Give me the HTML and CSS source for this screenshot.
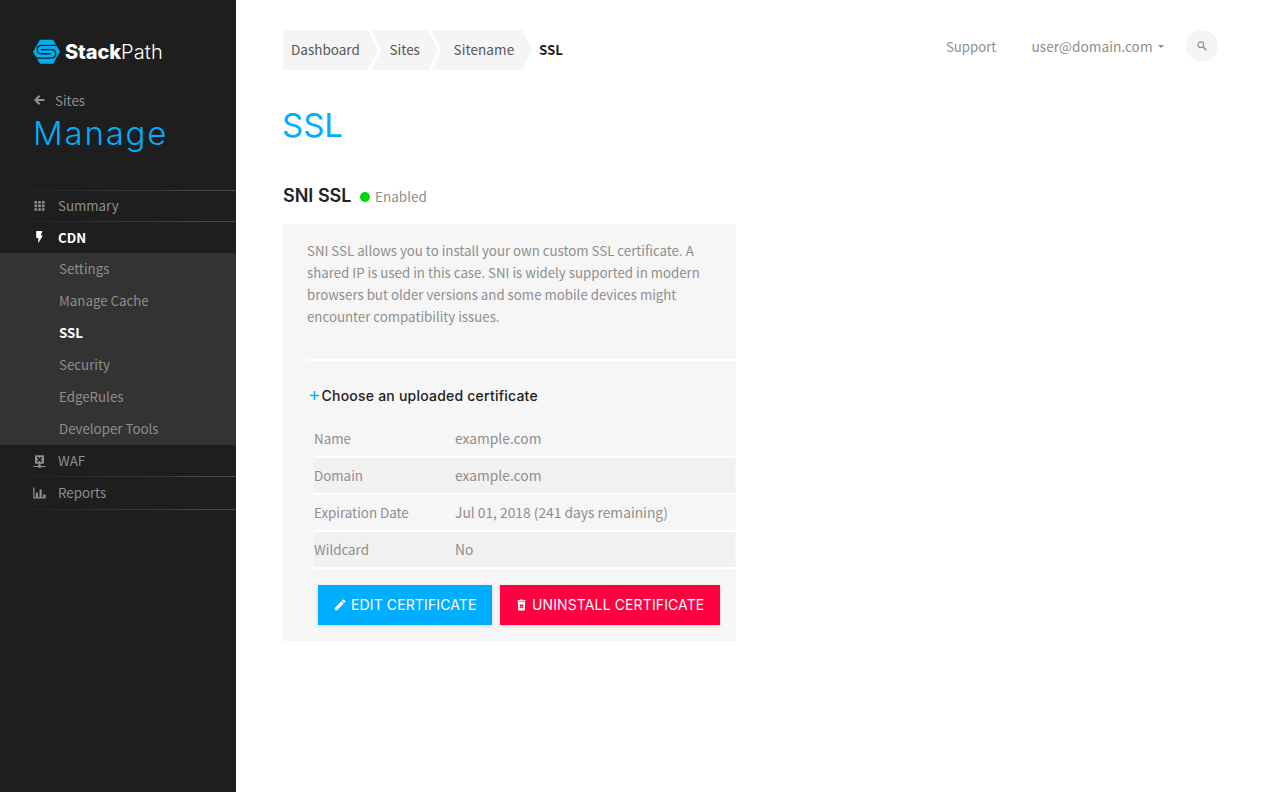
FILE: index.html
```html
<!DOCTYPE html>
<html lang="en">
<head>
<meta charset="utf-8">
<title>StackPath – SSL</title>
<link rel="stylesheet" href="styles.css">
</head>
<body>
<div class="app">
  <aside class="sidebar">
    <div class="logo">
      <svg class="logo-mark" viewBox="0 0 27 25" width="27" height="25">
        <path class="mark-fill" d="M7 .8h13.200L27 12.700l-6.800 12H7L0 12.700z"/>
        <path class="mark-cut" d="M24 6.400H9.200C6 6.400 4.200 8.300 4.200 10.700s1.800 4.100 4.600 4.100h8.700"/>
        <path class="mark-cut" d="M8 10.600h10c3 0 4.700 1.800 4.700 4.200s-1.800 4.300-5 4.300H3"/>
      </svg>
      <span class="logo-text"><b>Stack</b><span>Path</span></span>
    </div>
    <a class="back">
      <svg width="11" height="10" viewBox="0 0 11 10"><path d="M5.500 .7 1.500 5l4 4.300M2 5h8.500" fill="none" stroke="currentColor" stroke-width="2.200"/></svg>
      <span>Sites</span>
    </a>
    <h2 class="side-title">Manage</h2>
    <nav class="nav">
      <a class="item summary">
        <svg width="13" height="12" viewBox="0 0 13 12"><path d="M1.500 1h2.600v2.600H1.500zM5.200 1h2.600v2.600H5.200zM8.900 1h2.600v2.600H8.900zM1.500 4.600h2.600v2.600H1.500zM5.200 4.600h2.600v2.600H5.200zM8.900 4.600h2.600v2.600H8.900zM1.500 8.200h2.600v2.600H1.500zM5.200 8.200h2.600v2.600H5.200zM8.900 8.200h2.600v2.600H8.900z" fill="currentColor"/></svg>
        <span>Summary</span>
      </a>
      <a class="item cdn">
        <svg width="13" height="14" viewBox="0 0 13 14"><path d="M3.200 1h6.300L7.800 5.500h2L5.300 13.300V8H3.200z" fill="currentColor"/></svg>
        <span>CDN</span>
      </a>
      <div class="sub">
        <a>Settings</a><a>Manage Cache</a><a class="active">SSL</a><a>Security</a><a>EdgeRules</a><a>Developer Tools</a>
      </div>
      <a class="item waf">
        <svg width="13" height="13" viewBox="0 0 13 13"><path d="M3 .3h7q1 0 1 1v6.400q0 1-1 1H7.300v1.500H8V11h4.600v1H8v.8H5V12H.4v-1H5v-.8h.8V8.700H3q-1 0-1-1V1.300q0-1 1-1z" fill="currentColor"/><path d="m4.400 2.400 4.200 4.200m0-4.200L4.400 6.600" stroke="#1e1e1e" stroke-width="1.500"/></svg>
        <span>WAF</span>
      </a>
      <a class="item reports">
        <svg width="13" height="12" viewBox="0 0 13 12"><path d="M.2.500h1.300v9.700h1.300V5.500H5v4.700h1.500V2.500h2.200v7.700h1.400V7.500h2.500v4H.2z" fill="currentColor"/></svg>
        <span>Reports</span>
      </a>
    </nav>
  </aside>
  <main class="main">
    <header class="top">
      <nav class="crumbs">
        <a class="crumb first">Dashboard</a><a class="crumb second">Sites</a><a class="crumb third">Sitename</a><b>SSL</b>
      </nav>
      <div class="account">
        <a class="support">Support</a>
        <a class="user">user@domain.com</a>
        <svg class="caret" width="6" height="3" viewBox="0 0 6 3"><path d="M0 0h6L3 3z" fill="currentColor"/></svg>
        <button class="search"><svg width="10" height="10" viewBox="0 0 10 10"><circle cx="3.800" cy="3.700" r="2.800" fill="none" stroke="currentColor" stroke-width="1.100"/><path d="m5.800 5.700 3.500 3.500" stroke="currentColor" stroke-width="1.400"/></svg></button>
      </div>
    </header>
    <h1 class="title">SSL</h1>
    <div class="status">
      <h3>SNI SSL</h3><i class="dot"></i><span>Enabled</span>
    </div>
    <section class="panel">
      <p class="desc">SNI SSL allows you to install your own custom SSL certificate. A<br>shared IP is used in this case. SNI is widely supported in modern<br>browsers but older versions and some mobile devices might<br>encounter compatibility issues.</p>
      <div class="choose">
        <svg width="9" height="9" viewBox="0 0 9 9"><path d="M4.500 0v9M0 4.500h9" stroke="#00aeff" stroke-width="1.400"/></svg>
        <span>Choose an uploaded certificate</span>
      </div>
      <dl class="rows">
        <div><dt>Name</dt><dd>example.com</dd></div>
        <div><dt>Domain</dt><dd>example.com</dd></div>
        <div><dt>Expiration Date</dt><dd>Jul 01, 2018 (241 days remaining)</dd></div>
        <div><dt>Wildcard</dt><dd>No</dd></div>
      </dl>
      <div class="actions">
        <button class="btn edit"><svg width="12" height="12" viewBox="0 0 12 12"><path d="M.8 11.200V8.900l6.600-6.600 2.300 2.300-6.600 6.600zM8 1.700l.9-.9q.6-.5 1.200 0l1.100 1.100q.5.600 0 1.200l-.9.900z" fill="#fff"/></svg><span>EDIT CERTIFICATE</span></button>
        <button class="btn remove"><svg width="9" height="12" viewBox="0 0 9 12"><path d="M.5 1.200h2L3.100.6h2.800l.6.600h2v1.200h-8zM1 3.100h7v7.300q0 1-1 1H2q-1 0-1-1z" fill="#fff"/><path d="m2.800 5.500 3.400 3.600m0-3.600L2.800 9.100" stroke="#ff0040" stroke-width="1.200"/></svg><span>UNINSTALL CERTIFICATE</span></button>
      </div>
    </section>
  </main>
</div>
</body>
</html>
```
FILE: styles.css
```css
* { box-sizing: border-box; }
body { margin: 0; background: #fff; color: #8e8e8e; font: 13.5px/20px "Noto Sans CJK SC", "Open Sans", sans-serif; }
h1, h2, h3, p, dl, dd { margin: 0; }
svg { display: block; flex: none; }
button { border: 0; padding: 0; }
.app { display: flex; height: 792px; overflow: hidden; }
.sidebar { width: 236px; flex: none; background: #1e1e1e; font-size: 13.3px; }
.logo { display: flex; align-items: center; gap: 5px; height: 25px; margin: 39px 0 0 33px; }
.mark-fill { fill: #00aeef; }
.mark-cut { fill: none; stroke: #1e1e1e; stroke-width: 1.4; }
.logo-text { display: flex; color: #fff; font: 300 20px/24px Inter, sans-serif; letter-spacing: .15px; }
.logo-text b { font-weight: 800; letter-spacing: -.1px; }
.back { display: flex; align-items: center; gap: 10px; height: 20px; margin: 26px 0 0 34px; }
.back span { padding-top: 1px; }
.side-title { margin: 3px 0 0 33px; height: 40px; color: #00aeff; font: 300 33px/40px Inter, sans-serif; letter-spacing: 1.8px; }
.nav { margin-top: 37px; }
.item { display: flex; align-items: center; gap: 12px; padding-left: 33px; height: 32px; }
.summary, .cdn { background: linear-gradient(90deg, #1e1e1e, #4a4a4a) top / 100% 1px no-repeat; }
.summary { height: 31px; }
.cdn { color: #fff; font-weight: 700; }
.cdn span { padding-top: 2px; }
.waf { height: 31px; }
.waf svg { margin-top: 1px; }
.reports { height: 34px; background: linear-gradient(90deg, #1e1e1e, #4a4a4a) top / 100% 1px no-repeat, linear-gradient(90deg, #1e1e1e, #4a4a4a) bottom / 100% 1px no-repeat; }
.sub { display: flex; flex-direction: column; height: 192px; background: #333; }
.sub a { height: 32px; line-height: 32px; padding-left: 59px; }
.sub .active { color: #fff; font-weight: 700; }
.main { flex: 1; padding: 30px 44px 0 47px; }
.top { display: flex; justify-content: space-between; height: 40px; }
.crumbs { display: flex; line-height: 38px; color: #555; }
.crumb { height: 40px; background: #f5f5f5; }
.first { width: 95px; padding-left: 8px; clip-path: polygon(0 0, 85px 0, 100% 50%, 85px 100%, 0 100%); }
.second { width: 67px; margin-left: -7px; padding-left: 18.500px; clip-path: polygon(0 0, 57px 0, 100% 50%, 57px 100%, 0 100%, 10px 50%); }
.third { width: 101px; margin-left: -7px; padding-left: 22.500px; letter-spacing: .1px; clip-path: polygon(0 0, 91px 0, 100% 50%, 91px 100%, 0 100%, 10px 50%); }
.crumbs b { margin-left: 7px; color: #1e1e1e; font-size: 13.3px; line-height: 40px; }
.account { display: flex; height: 32px; align-items: center; }
.support { width: 85.500px; font-size: 13.200px; padding-top: 1px; }
.user { width: 126.500px; font-size: 13.700px; }
.caret { width: 6px; margin-right: 22px; }
.search { display: flex; align-items: center; justify-content: center; width: 32px; height: 32px; border-radius: 50%; background: #f5f5f5; color: #8e8e8e; }
.title { margin-top: 35px; margin-left: -1px; color: #00aeff; font: 400 33px/40px Inter, sans-serif; }
.status { display: flex; align-items: center; height: 24px; margin-top: 39px; }
.status h3 { width: 77px; color: #222; font: 600 18px/24px Inter, sans-serif; }
.dot { width: 10px; height: 10px; border-radius: 50%; background: #00d80e; margin: 2px 5px 0 0; }
.panel { width: 453px; height: 417px; margin-top: 16px; background: #f6f6f6; }
.desc { height: 137px; margin-left: 24px; padding-top: 16px; font-size: 13.270px; line-height: 22px; border-bottom: 2px solid #fff; white-space: nowrap; }
.choose { display: flex; align-items: center; gap: 2.500px; height: 20px; margin: 25px 0 0 27px; color: #222; font: 500 14px/20px Inter, sans-serif; letter-spacing: .22px; }
.choose svg { margin-bottom: 2px; }
.rows { margin: 15px 1px 0 31px; }
.rows div { display: flex; height: 37px; line-height: 35px; border-bottom: 2px solid #fff; }
.rows div:nth-child(even) { background: #f1f1f1; }
.rows dt { width: 141px; font-size: 13.350px; }
.rows dd { font-size: 13.800px; }
.actions { display: flex; gap: 8px; margin: 16px 0 0 35px; }
.btn { display: flex; align-items: center; gap: 5px; height: 40px; padding-left: 16px; color: #fff; font: 400 14px/20px Inter, sans-serif; letter-spacing: .12px; box-shadow: 0 1px 3px rgba(0,0,0,.15); white-space: nowrap; }
.edit { width: 174px; background: #00aeff; }
.remove { width: 220px; background: #ff0040; padding-left: 17px; gap: 6px; }
```
